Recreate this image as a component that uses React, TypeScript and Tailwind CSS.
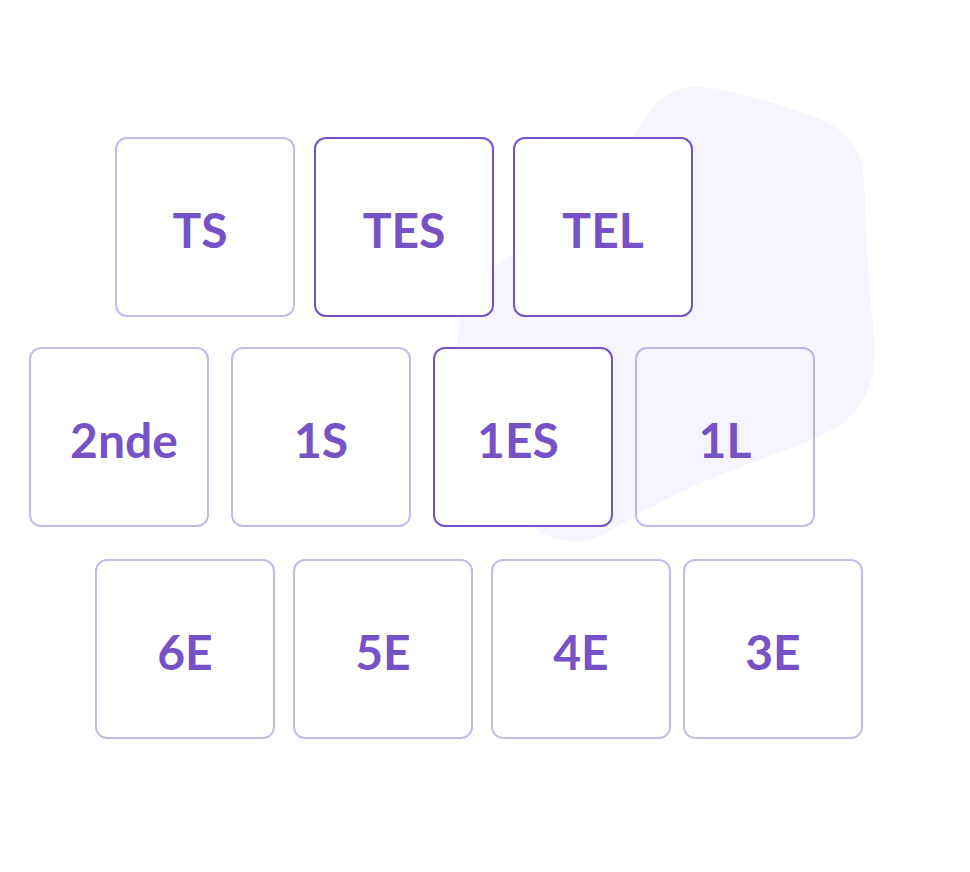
type Tile = { label: string; selected?: boolean; inset?: string };

function GradeTile({ label, selected = false, inset = "" }: Tile) {
  return (
    <button
      type="button"
      aria-pressed={selected}
      className={`flex size-[180px] shrink-0 items-center justify-center rounded-xl border-2 pt-1.5 text-5xl font-bold text-[#7553c6] ${
        selected ? "border-[#7553c6] bg-white" : "border-[#7553c6]/40"
      } ${inset}`}
    >
      {label}
    </button>
  );
}

function Blob() {
  return (
    <svg
      aria-hidden="true"
      className="absolute top-[87px] left-[456px] -z-10"
      width="420"
      height="455"
      viewBox="456 87 420 455"
      fill="#f6f4fe"
    >
      <path d="M697 87C724 87 756 98 790 108.500C819 117.500 844 128 854 145C865 163 865 194 866 221C867 257 869 285 872 316C874 333 875 342 875 350C874 391 860 420 813 439C781 453 746 464 708 480C679 492 650 507 622 524C607 533 593 541 575 541C559 541 546 536 531 527C493 508 456 430 456.500 353C457 314 470 281 500 262C524 244 550 237 579 216C601 200 620 162 634 137C650 109 664 87 697 87Z" />
    </svg>
  );
}

export default function App() {
  return (
    <main className="relative isolate flex min-h-screen flex-col overflow-hidden bg-white py-[137px] font-['Lato','Noto_Sans',sans-serif]">
      <Blob />
      <div className="flex gap-[19px] pl-[115px]">
        <GradeTile label="TS" inset="pr-2.5" />
        <GradeTile label="TES" selected />
        <GradeTile label="TEL" selected />
      </div>
      <div className="mt-[30px] flex gap-[22px] pl-[29px]">
        <GradeTile label="2nde" inset="pl-2.5" />
        <GradeTile label="1S" />
        <GradeTile label="1ES" selected inset="pr-2.5" />
        <GradeTile label="1L" />
      </div>
      <div className="mt-8 flex gap-[18px] pl-[95px]">
        <GradeTile label="6E" />
        <GradeTile label="5E" />
        <div className="flex gap-3">
          <GradeTile label="4E" />
          <GradeTile label="3E" />
        </div>
      </div>
    </main>
  );
}
